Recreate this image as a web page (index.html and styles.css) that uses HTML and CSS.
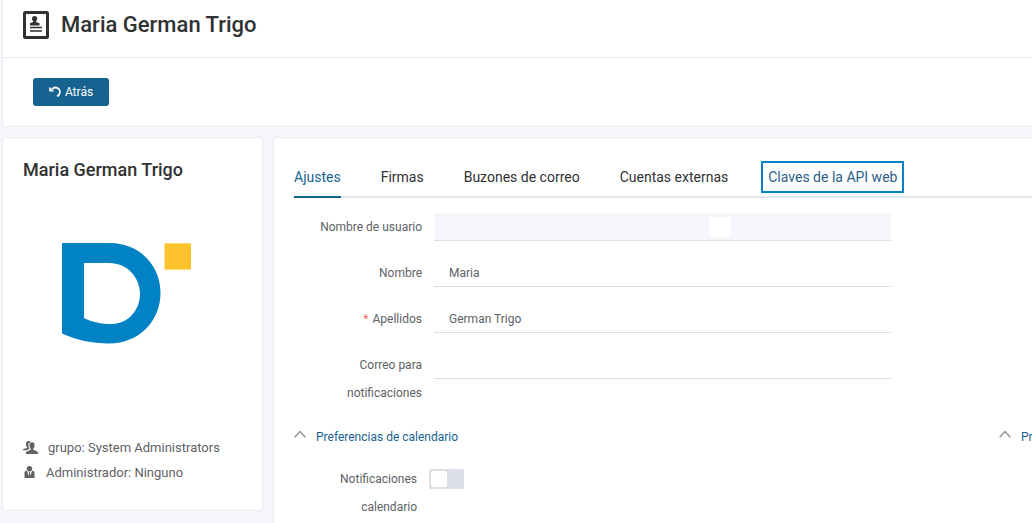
FILE: index.html
```html
<!DOCTYPE html>
<html lang="es">
<head>
<meta charset="utf-8">
<title>Maria German Trigo</title>
<link rel="stylesheet" href="styles.css">
</head>
<body>
<header class="card page-header">
  <div class="title-bar">
    <svg class="title-icon" viewBox="0 0 26 28" aria-hidden="true">
      <rect x="1.5" y="1.5" width="23" height="25" rx="1" fill="none" stroke="#303133" stroke-width="3"/>
      <path d="M11.500 5c1.700 0 2.700 1.100 2.700 2.700 0 1-.5 1.900-1.200 2.500v.9l3.500 1.200V14.500H7v-2.200l3.300-1.200v-.9C9.500 9.600 9 8.700 9 7.700 9 6.100 10 5 11.500 5z" fill="#303133"/>
      <path d="M7 16.500h12M7 20h12" stroke="#303133" stroke-width="1.500"/>
    </svg>
    <h1 class="title">Maria German Trigo</h1>
  </div>
  <div class="toolbar">
    <button class="back-button" type="button">
      <svg class="back-icon" viewBox="0 0 12 12" aria-hidden="true">
        <path d="M3 3.200C4.500 1.600 7 1.200 8.900 2.300c2.400 1.500 2.600 4.500.9 6.500-.5.600-1.100 1-1.800 1.300" fill="none" stroke="#fff" stroke-width="1.800"/>
        <path d="M.2.700v4.800h5z" fill="#fff"/>
      </svg>
      Atrás
    </button>
  </div>
</header>
<main class="columns">
  <aside class="card profile">
    <h2 class="profile-name">Maria German Trigo</h2>
    <svg class="logo" viewBox="0 0 130 101" role="img" aria-label="Logo">
      <path fill="#0082c4" fill-rule="evenodd" d="M0 0H48C77 0 98.500 22 98.500 50S77 100.500 47 100.500C30 100.500 14 97 0 90.500zM22 20V75C30 79 39 81 50 81C66 81 78 67 78 51S66 20 47 20z"/>
      <path fill="#fdc32d" d="M102.500 0.300h26.500v26.300h-26.500z"/>
    </svg>
    <ul class="facts">
      <li class="fact">
        <svg class="fact-icon wide" viewBox="0 0 15 13" aria-hidden="true" fill="#606266">
          <path d="M3 3C3 1 4 0 5.500 0c1 0 2 .4 2.300 1C5.700 1.500 5 3.200 5.400 5.200c.2 1.100.6 1.800 1.200 2.500L3.500 9.300H0V8.500c0-.8 3.800-1 4.100-1.700.2-.5-.7-1-.9-1.800z"/>
          <path d="M9 1.200c1.700 0 2.700 1.200 2.600 3.100-.1 1.600-.5 2.500-1.200 3.200v1.200c.6.900 4.600 1.200 4.600 2.900V13H3v-1.200c0-1.900 4-2.300 4.700-3.100V7.500C7 6.800 6.500 5.900 6.400 4.300 6.300 2.400 7.300 1.200 9 1.200z"/>
        </svg>
        grupo: System Administrators
      </li>
      <li class="fact">
        <svg class="fact-icon" viewBox="0 0 13 13" aria-hidden="true" fill="#606266">
          <circle cx="6.500" cy="2.700" r="2.700"/>
          <path d="M1.500 12V6.500C1.500 5.300 2.500 4.800 3.800 4.800L5.900 10l.2-3.200-.4-1h1.600l-.4 1 .2 3.200 2.100-5.200c1.300 0 2.300.5 2.300 1.700V12z"/>
        </svg>
        Administrador: Ninguno
      </li>
    </ul>
  </aside>
  <section class="card settings">
    <nav class="tabs">
      <a class="tab active" href="#ajustes">Ajustes</a>
      <a class="tab" href="#firmas">Firmas</a>
      <a class="tab" href="#buzones">Buzones de correo</a>
      <a class="tab" href="#cuentas">Cuentas externas</a>
      <a class="tab highlighted" href="#claves">Claves de la API web</a>
    </nav>
    <form class="form" id="ajustes">
      <div class="row">
        <label class="label" for="username">Nombre de usuario</label>
        <div class="field">
          <input class="input" id="username" type="text" disabled>
          <span class="mask"></span>
        </div>
      </div>
      <div class="row">
        <label class="label" for="first">Nombre</label>
        <div class="field"><input class="input" id="first" type="text" value="Maria"></div>
      </div>
      <div class="row">
        <label class="label" for="last"><span class="required">*</span> Apellidos</label>
        <div class="field"><input class="input" id="last" type="text" value="German Trigo"></div>
      </div>
      <div class="row">
        <label class="label" for="mail">Correo para notificaciones</label>
        <div class="field"><input class="input" id="mail" type="text"></div>
      </div>
      <div class="groups">
        <div class="group">
          <button class="group-title" type="button">
            <svg class="chevron" viewBox="0 0 12 8" aria-hidden="true"><path d="M.7 7.300L6 1.500l5.300 5.800" fill="none" stroke="#909399" stroke-width="1.500"/></svg>
            Preferencias de calendario
          </button>
          <div class="row switch-row">
            <label class="label switch-label" for="notify">Notificaciones calendario</label>
            <input class="switch" id="notify" type="checkbox">
          </div>
        </div>
        <div class="group">
          <button class="group-title" type="button">
            <svg class="chevron" viewBox="0 0 12 8" aria-hidden="true"><path d="M.7 7.300L6 1.500l5.300 5.800" fill="none" stroke="#909399" stroke-width="1.500"/></svg>
            Pr
          </button>
        </div>
      </div>
    </form>
  </section>
</main>
</body>
</html>
```
FILE: styles.css
```css
* {
  box-sizing: border-box;
}

body {
  margin: 0;
  padding-left: 2px;
  background: #f5f6fb;
  color: #606266;
  font-family: Roboto, "Liberation Sans", sans-serif;
  font-size: 12px;
  overflow: hidden;
}

.card {
  background: #fff;
  border: 1px solid #e9ebf3;
  border-radius: 4px;
}

.page-header {
  border-top: 0;
  border-right: 0;
  border-radius: 0 0 0 4px;
}

.title-bar {
  display: flex;
  align-items: center;
  gap: 12px;
  height: 58px;
  padding: 0 20px 8px;
  border-bottom: 1px solid #e9ebf3;
}

.title-icon {
  width: 26px;
  height: 28px;
}

.title {
  margin: 0;
  color: #303133;
  font-size: 22px;
  font-weight: 500;
}

.toolbar {
  padding: 20px 30px;
}

.back-button {
  display: flex;
  align-items: center;
  justify-content: center;
  gap: 4px;
  width: 76px;
  height: 28px;
  padding: 0;
  border: 0;
  border-radius: 3px;
  background: #166291;
  color: #fff;
  font: 12px Roboto, sans-serif;
}

.back-icon {
  width: 12px;
  height: 12px;
}

.columns {
  display: grid;
  grid-template-columns: 261px 1fr;
  gap: 10px;
  align-items: start;
  margin-top: 10px;
}

.profile {
  padding: 20px 20px 25px;
}

.profile-name {
  margin: 0;
  color: #303133;
  font-size: 18px;
  font-weight: 500;
  line-height: 24px;
}

.logo {
  display: block;
  width: 130px;
  height: 101px;
  margin: 61px 0 91px 39px;
}

.facts {
  margin: 0;
  padding: 0;
  list-style: none;
}

.fact {
  display: flex;
  align-items: center;
  gap: 10px;
  height: 25px;
  font-size: 13px;
}

.fact-icon {
  width: 13px;
  height: 13px;
}

.fact-icon.wide {
  width: 15px;
}

.settings {
  min-height: 400px;
  padding: 20px 0 20px 20px;
  border-right: 0;
  border-radius: 4px 0 0 0;
}

.tabs {
  display: flex;
  gap: 40px;
  border-bottom: 2px solid #e4e7ed;
  white-space: nowrap;
}

.tab {
  margin-bottom: -2px;
  border-bottom: 2px solid transparent;
  color: #303133;
  font-size: 14px;
  line-height: 38px;
  text-decoration: none;
}

.tab.active {
  border-color: #166291;
  color: #166291;
}

.tab.highlighted {
  align-self: center;
  margin: 0 0 0 -7px;
  padding: 0 5px;
  border: 2px solid #0082c4;
  color: #2c5f8a;
  line-height: 28px;
}

.form {
  display: grid;
  gap: 18px;
  padding-top: 15px;
}

.row {
  display: flex;
  gap: 12px;
}

.label {
  width: 128px;
  padding-left: 20px;
  line-height: 28px;
  text-align: right;
}

.required {
  margin-right: 1px;
  color: #f56c6c;
}

.field {
  position: relative;
  flex: 0 1 457px;
}

.input {
  display: block;
  width: 100%;
  height: 28px;
  padding: 0 15px;
  border: 0;
  border-bottom: 1px solid #dcdfe6;
  border-radius: 0;
  background: #fff;
  color: #606266;
  font: 12px Roboto, sans-serif;
}

.input:disabled {
  background: #f5f6fb;
}

.mask {
  position: absolute;
  top: 4px;
  left: 275px;
  width: 22px;
  height: 20px;
  background: #fff;
}

.groups {
  display: grid;
  grid-template-columns: 1fr 33px;
}

.group-title {
  display: flex;
  align-items: center;
  gap: 10px;
  height: 24px;
  padding: 0;
  border: 0;
  background: none;
  color: #166291;
  font: 12px Roboto, sans-serif;
  white-space: nowrap;
}

.chevron {
  flex: none;
  width: 12px;
  height: 8px;
  margin-bottom: 6px;
}

.switch-row {
  margin-top: 16px;
}

.switch-label {
  width: 123px;
}

.switch {
  appearance: none;
  width: 35px;
  height: 20px;
  margin: 4px 0 0;
  padding: 2px;
  border-radius: 2px;
  background: #dcdfe6;
}

.switch::before {
  content: "";
  display: block;
  width: 16px;
  height: 16px;
  border-radius: 2px;
  background: #fff;
}
```
